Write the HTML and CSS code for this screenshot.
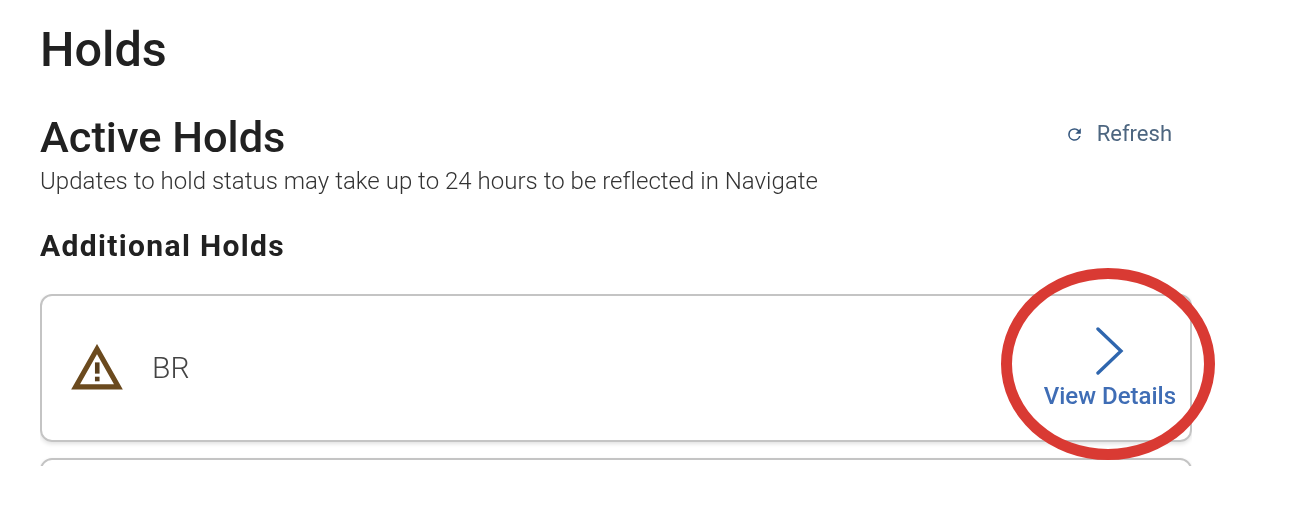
FILE: index.html
```
<!DOCTYPE html>
<html lang="en">
<head>
<meta charset="utf-8">
<title>Holds</title>
<link rel="stylesheet" href="styles.css">
</head>
<body>
<main class="page">
  <h1 class="title">Holds</h1>
  <div class="head-row">
    <div class="head-text">
      <h2 class="subtitle">Active Holds</h2>
      <p class="note">Updates to hold status may take up to 24 hours to be reflected in Navigate</p>
    </div>
    <a class="refresh">
      <svg class="refresh-icon" viewBox="0 0 24 24"><path d="M17.65 6.35A7.96 7.96 0 0 0 12 4a8 8 0 1 0 7.73 10h-2.08A6 6 0 1 1 12 6c1.66 0 3.14.69 4.22 1.78L13 11h7V4l-2.35 2.35z"/></svg>
      <span>Refresh</span>
    </a>
  </div>
  <h3 class="section">Additional Holds</h3>
  <div class="list">
    <article class="card">
      <svg class="warn" viewBox="0 0 50 46"><path class="warn-tri" d="M25 5 L46 42 H4 Z"/><rect class="warn-mark" x="23" y="18" width="4.5" height="11"/><rect class="warn-mark" x="23" y="32" width="4.5" height="4.5"/></svg>
      <span class="code">BR</span>
      <a class="details">
        <svg class="chev" viewBox="0 0 30 50"><path d="M3 2 L27 25 L3 48"/></svg>
        <span>View Details</span>
      </a>
    </article>
    <article class="card card-next"></article>
  </div>
</main>
<div class="circle"></div>
</body>
</html>
```
FILE: styles.css
```
* { box-sizing: border-box; }
html, body { margin: 0; height: 518px; overflow: hidden; background: #fff; }
body { position: relative; font-family: Roboto, "Liberation Sans", sans-serif; color: #212121; }
.page { width: 1152px; margin-left: 40px; padding-top: 21px; filter: blur(0.35px); }
.title { margin: 0; font-size: 48.6px; line-height: 58px; font-weight: 500; }
.head-row { display: flex; justify-content: space-between; align-items: flex-start; margin-top: 34px; padding-right: 20px; }
.subtitle { margin: 0; font-size: 43.4px; line-height: 50px; font-weight: 500; }
.note { margin: 3px 0 0; font-size: 24px; line-height: 30px; font-weight: 300; letter-spacing: 0.03px; color: #333; }
.refresh { display: flex; align-items: center; gap: 13px; margin-top: 7px; font-size: 22px; line-height: 28px; color: #4d6680; filter: blur(0.5px); }
.refresh-icon { width: 19px; height: 19px; fill: #34567d; }
.section { margin: 32px 0 0; font-size: 30px; line-height: 36px; font-weight: 700; letter-spacing: 1.35px; }
.list { display: flex; flex-direction: column; gap: 16px; margin-top: 30px; height: 172px; overflow: hidden; }
.card { flex: none; display: flex; align-items: center; height: 148px; padding: 0 14px 0 29px; border: 2px solid #c4c4c4; border-radius: 12px; box-shadow: 0 2px 4px rgba(0,0,0,.12); }
.card-next { height: 60px; }
.warn { width: 52px; height: 47px; margin-top: -2px; }
.warn-tri { fill: none; stroke: #6b4a1e; stroke-width: 5; stroke-linejoin: miter; }
.warn-mark { fill: #5a3f1c; }
.code { margin-left: 29px; font-size: 30px; line-height: 36px; font-weight: 300; color: #444; }
.details { margin-left: auto; display: flex; flex-direction: column; align-items: center; color: #3f6db5; font-size: 24px; line-height: 28px; font-weight: 500; }
.chev { width: 29px; height: 48px; margin-bottom: 7px; fill: none; stroke: #2f66ae; stroke-width: 3.5; stroke-linecap: round; }
.circle { position: absolute; left: 1001px; top: 268px; width: 214px; height: 192px; border: 11px solid #d93a33; border-radius: 50%; filter: blur(0.35px); }
```
